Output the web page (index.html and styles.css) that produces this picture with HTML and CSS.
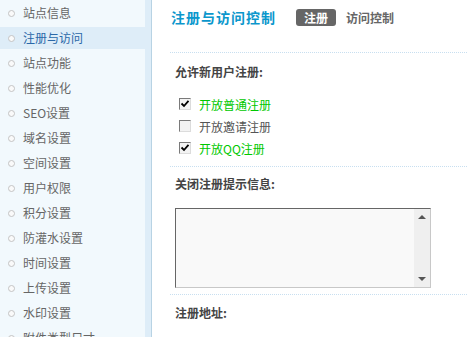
FILE: index.html
```html
<!DOCTYPE html>
<html lang="zh-CN">
<head>
<meta charset="utf-8">
<title>注册与访问控制</title>
<link rel="stylesheet" href="styles.css">
</head>
<body>
<div class="page">
  <aside class="sidebar">
    <ul class="menu">
      <li class="item"><span class="dot"></span>站点信息</li>
      <li class="item active"><span class="dot"></span>注册与访问</li>
      <li class="item"><span class="dot"></span>站点功能</li>
      <li class="item"><span class="dot"></span>性能优化</li>
      <li class="item"><span class="dot"></span>SEO设置</li>
      <li class="item"><span class="dot"></span>域名设置</li>
      <li class="item"><span class="dot"></span>空间设置</li>
      <li class="item"><span class="dot"></span>用户权限</li>
      <li class="item"><span class="dot"></span>积分设置</li>
      <li class="item"><span class="dot"></span>防灌水设置</li>
      <li class="item"><span class="dot"></span>时间设置</li>
      <li class="item"><span class="dot"></span>上传设置</li>
      <li class="item"><span class="dot"></span>水印设置</li>
      <li class="item"><span class="dot"></span>附件类型尺寸</li>
    </ul>
  </aside>
  <main class="main">
    <div class="header">
      <h1 class="title">注册与访问控制</h1>
      <span class="tab current">注册</span>
      <span class="tab">访问控制</span>
    </div>
    <section class="section s1">
      <h2 class="heading">允许新用户注册:</h2>
      <div class="options">
        <div class="option on"><span class="box"><svg viewBox="0 0 10 10" width="10" height="10"><path d="M1.5 4.5 L4 7 L8.5 1.8" fill="none" stroke="#000" stroke-width="1.8"/></svg></span>开放普通注册</div>
        <div class="option"><span class="box"></span>开放邀请注册</div>
        <div class="option on"><span class="box"><svg viewBox="0 0 10 10" width="10" height="10"><path d="M1.5 4.5 L4 7 L8.5 1.8" fill="none" stroke="#000" stroke-width="1.8"/></svg></span>开放QQ注册</div>
      </div>
    </section>
    <section class="section s2">
      <h2 class="heading">关闭注册提示信息:</h2>
      <div class="textbox">
        <div class="textfield"></div>
        <div class="scrollbar">
          <span class="arrow up"></span>
          <span class="arrow down"></span>
        </div>
      </div>
    </section>
    <section class="section s3">
      <h2 class="heading">注册地址:</h2>
    </section>
  </main>
</div>
</body>
</html>
```
FILE: styles.css
```css
html, body {
  margin: 0;
  padding: 0;
  background: #fff;
  font-family: "Noto Sans CJK SC", "Liberation Sans", sans-serif;
  font-size: 12px;
}
.page {
  display: flex;
  height: 337px;
  overflow: hidden;
}
.sidebar {
  width: 145px;
  flex: none;
  background: #f2f9fd;
  border-right: 6px solid #deedf8;
  box-shadow: 1px 0 0 #b8d3e4;
  margin-right: 1px;
}
.menu {
  list-style: none;
  margin: 0;
  padding: 2px 0 0;
}
.item {
  display: flex;
  align-items: center;
  height: 22px;
  margin-bottom: 3px;
  color: #666;
  white-space: nowrap;
  line-height: 22px;
}
.item.active {
  background: #deedf8;
  color: #2a68a8;
  margin-right: -6px;
}
.dot {
  width: 5px;
  height: 5px;
  border: 1px solid #c4c4c4;
  border-radius: 50%;
  background: #fafafa;
  margin: 0 8px 0 8px;
  flex: none;
}
.main {
  flex: 1;
  padding-left: 18px;
  min-width: 0;
}
.header {
  display: flex;
  align-items: center;
  height: 17px;
  margin-top: 9px;
  padding-bottom: 26px;
  border-bottom: 1px dotted #c8dff0;
}
.title {
  margin: 0 20px 0 1px;
  font-size: 14px;
  letter-spacing: 1px;
  font-weight: bold;
  color: #0b97cc;
  line-height: 17px;
}
.tab {
  font-weight: bold;
  color: #666;
  font-size: 12px;
  line-height: 17px;
  height: 17px;
}
.tab.current {
  background: #666;
  color: #fff;
  border-radius: 3px;
  padding: 0 8px;
  margin-right: 10px;
}
.section {
  padding-left: 5px;
}
.heading {
  margin: 0;
  font-size: 12px;
  font-weight: bold;
  color: #444;
  line-height: 22px;
}
.s1 {
  padding-top: 8px;
  padding-bottom: 7px;
  border-bottom: 1px dotted #c8dff0;
}
.options {
  margin-top: 10px;
  padding-left: 4px;
}
.option {
  display: flex;
  align-items: center;
  height: 22px;
  color: #555;
}
.option.on {
  color: #00c800;
}
.box {
  width: 10px;
  height: 10px;
  border: 1px solid;
  border-color: #7a7a7a #dcdcdc #dcdcdc #7a7a7a;
  background: #f3f3f3;
  margin-right: 8px;
  display: flex;
  align-items: center;
  justify-content: center;
  flex: none;
}
.box svg {
  display: block;
}
.s2 {
  padding-top: 6px;
  padding-bottom: 6px;
  border-bottom: 1px dotted #c8dff0;
}
.textbox {
  margin-top: 13px;
  width: 254px;
  height: 78px;
  border: 1px solid;
  border-color: #666 #c8c8c8 #c8c8c8 #666;
  background: #f9f9f9;
  display: flex;
}
.textfield {
  flex: 1;
}
.scrollbar {
  width: 16px;
  background: #efefef;
  display: flex;
  flex-direction: column;
  justify-content: space-between;
  align-items: center;
  padding: 6px 0 6px;
}
.arrow {
  width: 0;
  height: 0;
  border-left: 4px solid transparent;
  border-right: 4px solid transparent;
}
.arrow.up {
  border-bottom: 4px solid #555;
}
.arrow.down {
  border-top: 4px solid #555;
}
.s3 {
  padding-top: 7px;
}
```
